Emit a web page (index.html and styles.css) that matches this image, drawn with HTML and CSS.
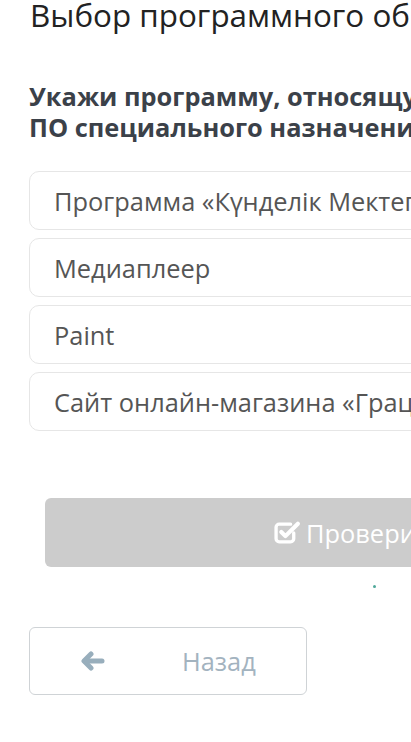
FILE: index.html
```html
<!DOCTYPE html>
<html lang="ru">
<head>
<meta charset="utf-8">
<title>Выбор программного обеспечения</title>
<link rel="stylesheet" href="styles.css">
</head>
<body>
<div class="page">
  <h1 class="title">Выбор программного обеспечения</h1>
  <div class="question">Укажи программу, относящуюся к<br>ПО специального назначения</div>
  <div class="options">
    <div class="option">Программа «Күнделік Мектеп»</div>
    <div class="option">Медиаплеер</div>
    <div class="option">Paint</div>
    <div class="option">Сайт онлайн-магазина «Грация»</div>
  </div>
  <div class="check-wrap">
    <button class="check-btn" type="button">
      <svg class="check-icon" width="27" height="25" viewBox="0 0 26 24" aria-hidden="true">
        <path d="M19 12.5v5.5a3 3 0 0 1-3 3H5a3 3 0 0 1-3-3V7a3 3 0 0 1 3-3h11" fill="none" stroke="#fff" stroke-width="3.2" stroke-linecap="round" stroke-linejoin="round"/>
        <path d="M7 11.5l4 4L23 3.5" fill="none" stroke="#fff" stroke-width="4" stroke-linecap="round" stroke-linejoin="round"/>
      </svg>
      <span>Проверить</span>
    </button>
  </div>
  <div class="status"><span class="dot"></span></div>
  <button class="back-btn" type="button">
    <svg class="back-icon" width="26" height="20" viewBox="0 0 26 20" aria-hidden="true">
      <path d="M11 3L4 10l7 7" fill="none" stroke="#98aebc" stroke-width="5" stroke-linecap="round" stroke-linejoin="round"/>
      <path d="M5 10h17" fill="none" stroke="#98aebc" stroke-width="5" stroke-linecap="round"/>
    </svg>
    <span class="back-label">Назад</span>
  </button>
</div>
</body>
</html>
```
FILE: styles.css
```css
html, body {
  margin: 0;
  padding: 0;
  overflow: hidden;
  background: #fff;
}
body {
  font-family: "Open Sans", "Noto Sans", sans-serif;
  width: 411px;
  height: 742px;
}
.page {
  width: 760px;
  padding-left: 29px;
  box-sizing: border-box;
}
.title {
  margin: 0;
  font-size: 31.4px;
  line-height: 30px;
  font-weight: 400;
  color: #222;
  white-space: nowrap;
  padding-left: 1px;
}
.question {
  margin-top: 51px;
  font-size: 25.4px;
  line-height: 31px;
  font-weight: 700;
  color: #3b4149;
  white-space: nowrap;
}
.options {
  margin-top: 28px;
  display: flex;
  flex-direction: column;
  gap: 8px;
}
.option {
  height: 59px;
  box-sizing: border-box;
  border: 1px solid #e6e6e6;
  border-radius: 10px;
  padding-left: 24px;
  display: flex;
  align-items: center;
  font-size: 25.4px;
  color: #555;
  white-space: nowrap;
}
.check-wrap {
  padding-left: 16px;
  margin-top: 67px;
}
.check-btn {
  width: 620px;
  height: 69px;
  border: 0;
  border-radius: 6px;
  background: #cccccc;
  color: #fff;
  font-family: inherit;
  font-size: 25.4px;
  display: flex;
  align-items: center;
  padding-left: 229px;
  gap: 5px;
}
.check-icon {
  flex: none;
  margin-top: -1px;
}
.status {
  height: 60px;
  position: relative;
}
.dot {
  position: absolute;
  left: 344px;
  top: 18px;
  width: 3px;
  height: 3px;
  border-radius: 50%;
  background: #4fa89a;
}
.back-btn {
  width: 278px;
  height: 68px;
  border: 1px solid #cfd3d6;
  border-radius: 6px;
  background: #fff;
  font-family: inherit;
  font-size: 25.4px;
  color: #a3b3bf;
  display: flex;
  align-items: center;
  padding: 0 0 0 50px;
  box-sizing: border-box;
}
.back-icon {
  flex: none;
}
.back-label {
  margin-left: 76px;
}
```
